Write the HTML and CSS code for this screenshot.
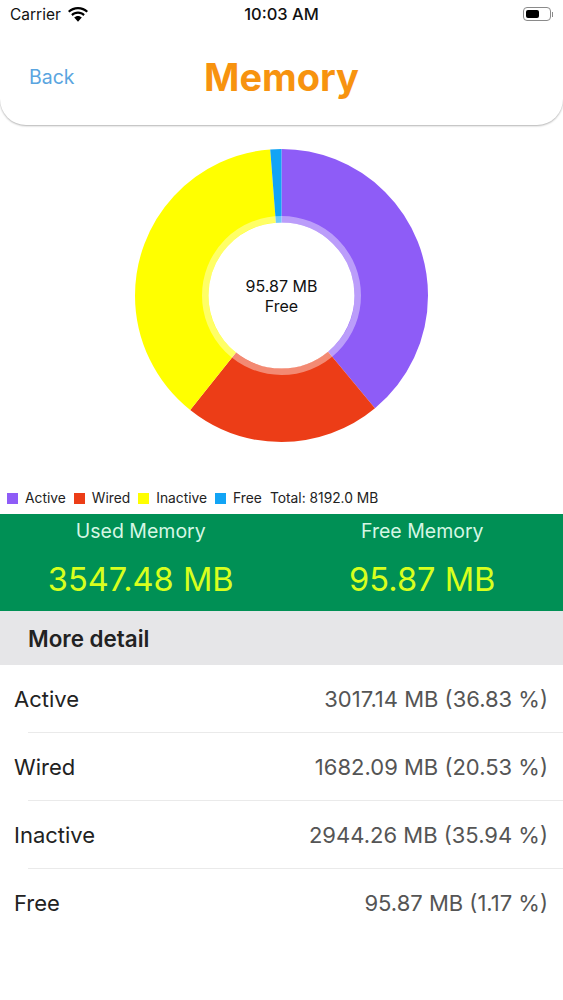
FILE: index.html
```html
<!DOCTYPE html>
<html lang="en">
<head>
    <meta charset="UTF-8">
    <meta name="viewport" content="width=device-width, initial-scale=1.0">
    <title>Memory</title>
    <link rel="stylesheet" href="styles.css">
</head>
<body>
    <header class="top">
        <div class="status-bar">
            <div class="status-left">
                <span>Carrier</span>
                <svg class="wifi" viewBox="0 0 20 15" width="20" height="15">
                    <path d="M10 2.2c3.3 0 6.3 1.3 8.5 3.4l1.5-1.7C17.4 1.400 13.900 0 10 0S2.600 1.400 0 3.900l1.500 1.700C3.700 3.500 6.700 2.200 10 2.200z"/>
                    <path d="M10 6.800c2 0 3.900.8 5.300 2.100l1.500-1.700C15 5.500 12.600 4.500 10 4.500S5 5.500 3.200 7.200l1.500 1.700C6.100 7.600 8 6.800 10 6.800z"/>
                    <path d="M10 9c-1.500 0-2.800.6-3.800 1.500L10 14.800l3.800-4.300C12.800 9.600 11.500 9 10 9z"/>
                </svg>
            </div>
            <span class="status-time">10:03 AM</span>
            <div class="battery">
                <div class="battery-body"><div class="battery-level"></div></div>
                <div class="battery-nub"></div>
            </div>
        </div>
        <nav class="nav">
            <a class="back">Back</a>
            <h1>Memory</h1>
        </nav>
    </header>

    <section class="chart">
        <svg viewBox="0 0 293 293" width="293" height="293">
            <g transform="rotate(-90 146.500 146.500)" fill="none" stroke-width="73.500">
                <circle cx="146.500" cy="146.500" r="109.750" pathLength="100" stroke="#8e5cf7" stroke-dasharray="38.980 100"/>
                <circle cx="146.500" cy="146.500" r="109.750" pathLength="100" stroke="#ec3d17" stroke-dasharray="21.730 100" stroke-dashoffset="-38.980"/>
                <circle cx="146.500" cy="146.500" r="109.750" pathLength="100" stroke="#ffff00" stroke-dasharray="38.040 100" stroke-dashoffset="-60.710"/>
                <circle cx="146.500" cy="146.500" r="109.750" pathLength="100" stroke="#12a4f5" stroke-dasharray="1.250 100" stroke-dashoffset="-98.750"/>
            </g>
            <circle cx="146.500" cy="146.500" r="76.250" fill="none" stroke="#fff" stroke-opacity="0.400" stroke-width="6.500"/>
        </svg>
        <div class="chart-label">95.87 MB<br>Free</div>
    </section>

    <div class="legend">
        <span class="legend-item"><i class="swatch active"></i>Active</span>
        <span class="legend-item"><i class="swatch wired"></i>Wired</span>
        <span class="legend-item"><i class="swatch inactive"></i>Inactive</span>
        <span class="legend-item"><i class="swatch free"></i>Free</span>
        <span class="legend-total">Total: 8192.0 MB</span>
    </div>

    <section class="summary">
        <div class="summary-col">
            <div class="summary-title">Used Memory</div>
            <div class="summary-value">3547.48 MB</div>
        </div>
        <div class="summary-col">
            <div class="summary-title">Free Memory</div>
            <div class="summary-value">95.87 MB</div>
        </div>
    </section>

    <div class="section-head">More detail</div>

    <ul class="detail">
        <li><span>Active</span><span class="detail-value">3017.14 MB (36.83 %)</span></li>
        <li><span>Wired</span><span class="detail-value">1682.09 MB (20.53 %)</span></li>
        <li><span>Inactive</span><span class="detail-value">2944.26 MB (35.94 %)</span></li>
        <li><span>Free</span><span class="detail-value">95.87 MB (1.17 %)</span></li>
    </ul>
</body>
</html>
```

FILE: styles.css
```css
body {
    margin: 0;
    background-color: #fff;
    color: #222;
    font-family: Inter, "Liberation Sans", sans-serif;
}
.top {
    height: 125px;
    border-radius: 0 0 26px 26px;
    box-shadow: 0 1px 2px rgba(0, 0, 0, 0.3);
    background-color: #fff;
}
.status-bar {
    display: grid;
    grid-template-columns: 1fr auto 1fr;
    align-items: center;
    height: 28px;
    padding: 0 10px;
    color: #111;
    font-size: 15.500px;
}
.status-left {
    display: flex;
    align-items: center;
    gap: 7px;
}
.status-time {
    font-size: 16.500px;
    font-weight: 500;
}
.battery {
    display: flex;
    align-items: center;
    justify-content: flex-end;
    gap: 1px;
}
.battery-body {
    box-sizing: border-box;
    width: 28px;
    height: 14px;
    padding: 2px;
    border: 1px solid #8a8a8a;
    border-radius: 4px;
}
.battery-level {
    width: 13px;
    height: 100%;
    background-color: #000;
    border-radius: 2px;
}
.battery-nub {
    width: 1px;
    height: 5px;
    background-color: #8a8a8a;
}
.nav {
    display: grid;
    grid-template-columns: 1fr auto 1fr;
    align-items: center;
    height: 97px;
    padding: 0 29px;
}
.back {
    color: #5aa5e0;
    font-size: 19.500px;
}
.nav h1 {
    margin: 0;
    color: #f7930f;
    font-size: 38px;
    font-weight: 700;
}
.chart {
    position: relative;
    display: flex;
    justify-content: center;
    padding-top: 24px;
    height: 339px;
}
.chart-label {
    position: absolute;
    left: 0;
    right: 0;
    top: 151px;
    text-align: center;
    color: #111;
    font-size: 16px;
    line-height: 20px;
}
.legend {
    display: flex;
    align-items: center;
    height: 20px;
    margin-bottom: 6px;
    padding-left: 7px;
    font-size: 13.800px;
    color: #222;
}
.legend-item {
    display: flex;
    align-items: center;
    gap: 7px;
    margin-right: 8px;
}
.swatch {
    width: 11px;
    height: 11px;
}
.swatch.active {
    background-color: #8e5cf7;
}
.swatch.wired {
    background-color: #ec3d17;
}
.swatch.inactive {
    background-color: #ffff00;
}
.swatch.free {
    background-color: #12a4f5;
}
.summary {
    display: grid;
    grid-template-columns: 1fr 1fr;
    height: 97px;
    background-color: #009055;
    text-align: center;
}
.summary-title {
    margin-top: 5px;
    color: #d5f7e4;
    font-size: 19.500px;
    line-height: 24px;
}
.summary-value {
    margin-top: 16px;
    color: #d8ff1e;
    font-size: 32.600px;
    line-height: 40px;
}
.section-head {
    height: 54px;
    padding-left: 28px;
    background-color: #e6e6e8;
    font-size: 22.400px;
    font-weight: 600;
    line-height: 56px;
}
.detail {
    margin: 0;
    padding: 0;
    list-style: none;
}
.detail li {
    position: relative;
    display: flex;
    justify-content: space-between;
    align-items: center;
    height: 68px;
    padding: 0 15px 0 14px;
    font-size: 22px;
}
.detail li:not(:last-child)::after {
    content: "";
    position: absolute;
    left: 28px;
    right: 0;
    bottom: 0;
    height: 1px;
    background-color: #eaeaea;
}
.detail-value {
    color: #555;
}
```
